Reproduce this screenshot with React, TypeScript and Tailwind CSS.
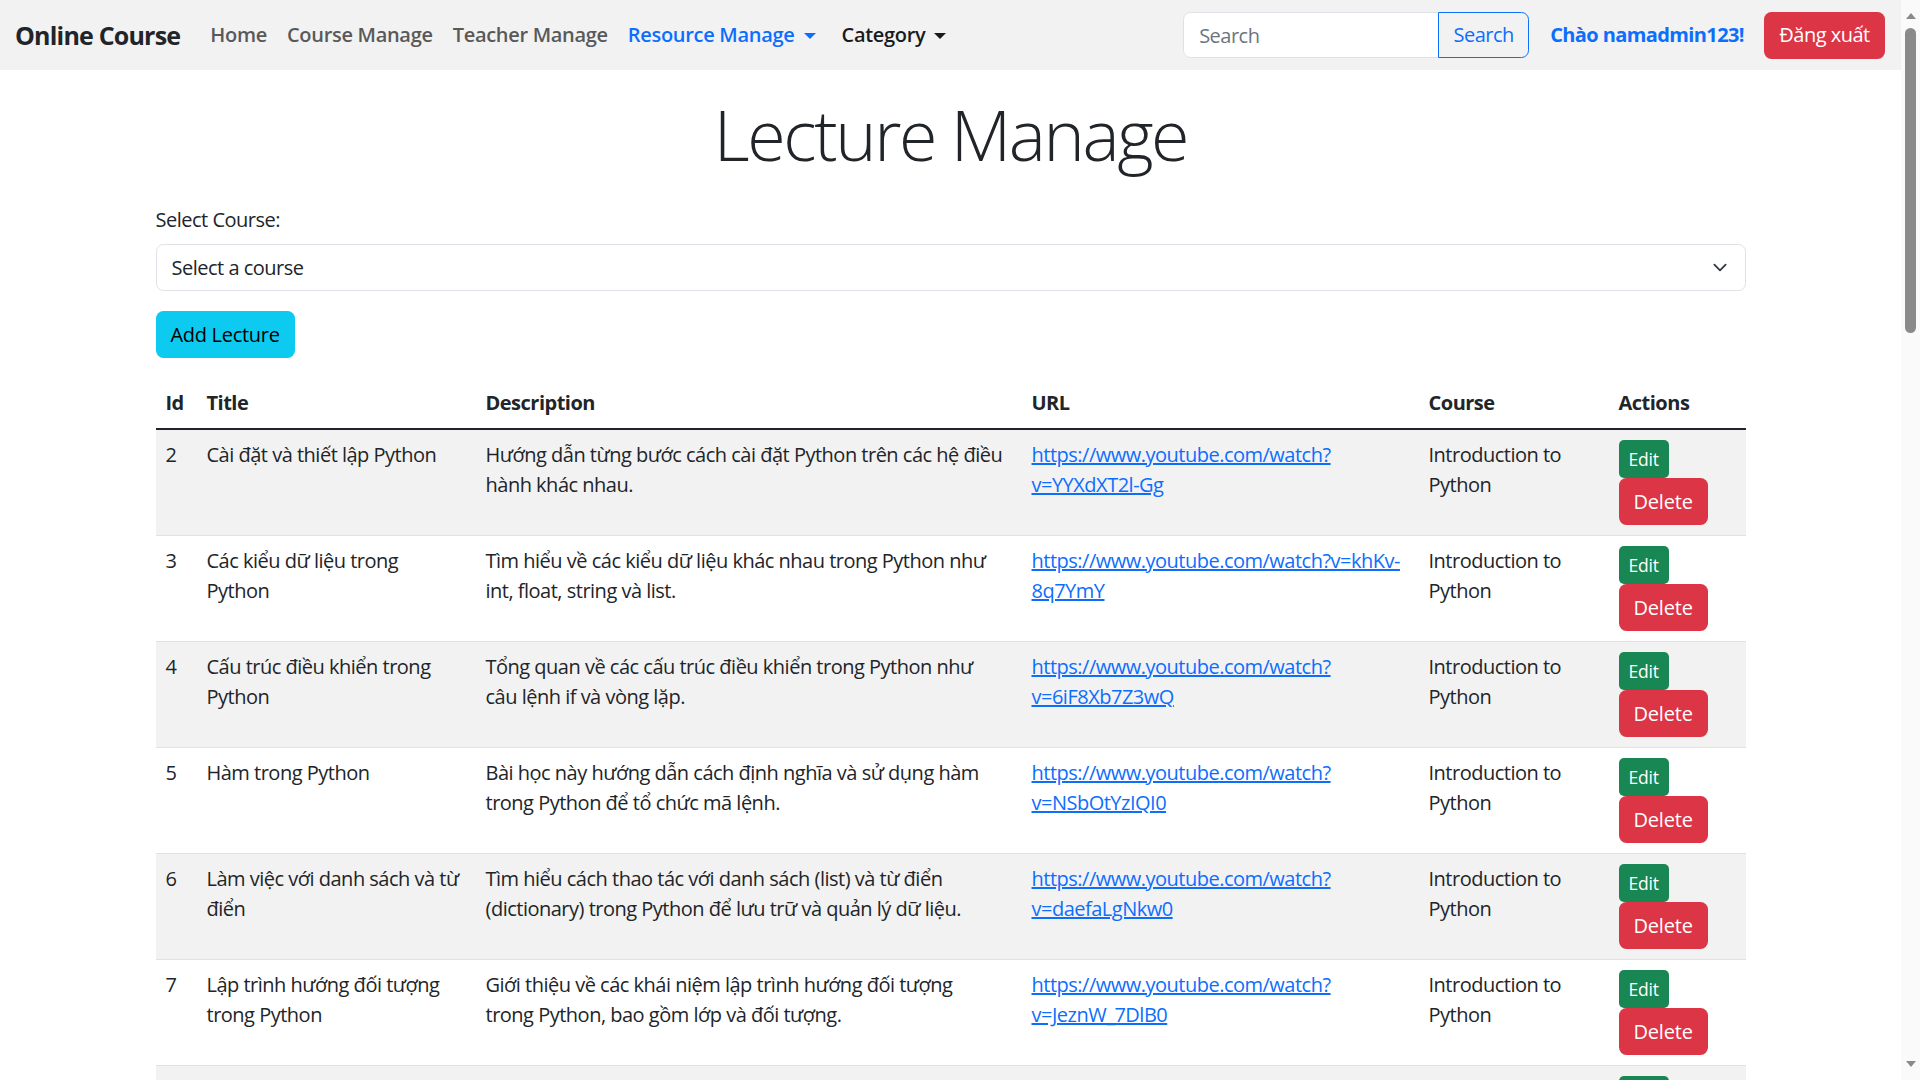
import React from "react";

type Lecture = {
  id: number;
  title: string[];
  description: string[];
  url: string[];
};

const lectures: Lecture[] = [
  {
    id: 2,
    title: ["Cài đặt và thiết lập Python"],
    description: ["Hướng dẫn từng bước cách cài đặt Python trên các hệ điều", "hành khác nhau."],
    url: ["https://www.youtube.com/watch?", "v=YYXdXT2l-Gg"],
  },
  {
    id: 3,
    title: ["Các kiểu dữ liệu trong", "Python"],
    description: ["Tìm hiểu về các kiểu dữ liệu khác nhau trong Python như", "int, float, string và list."],
    url: ["https://www.youtube.com/watch?v=khKv-", "8q7YmY"],
  },
  {
    id: 4,
    title: ["Cấu trúc điều khiển trong", "Python"],
    description: ["Tổng quan về các cấu trúc điều khiển trong Python như", "câu lệnh if và vòng lặp."],
    url: ["https://www.youtube.com/watch?", "v=6iF8Xb7Z3wQ"],
  },
  {
    id: 5,
    title: ["Hàm trong Python"],
    description: ["Bài học này hướng dẫn cách định nghĩa và sử dụng hàm", "trong Python để tổ chức mã lệnh."],
    url: ["https://www.youtube.com/watch?", "v=NSbOtYzIQI0"],
  },
  {
    id: 6,
    title: ["Làm việc với danh sách và từ", "điển"],
    description: ["Tìm hiểu cách thao tác với danh sách (list) và từ điển", "(dictionary) trong Python để lưu trữ và quản lý dữ liệu."],
    url: ["https://www.youtube.com/watch?", "v=daefaLgNkw0"],
  },
  {
    id: 7,
    title: ["Lập trình hướng đối tượng", "trong Python"],
    description: ["Giới thiệu về các khái niệm lập trình hướng đối tượng", "trong Python, bao gồm lớp và đối tượng."],
    url: ["https://www.youtube.com/watch?", "v=JeznW_7DlB0"],
  },
  {
    id: 8,
    title: [""],
    description: [""],
    url: [""],
  },
];

const Caret = () => (
  <svg width="12" height="6" viewBox="0 0 12 6" className="ml-[9px] mt-[2px] shrink-0">
    <polygon points="0,0 12,0 6,6" fill="currentColor" />
  </svg>
);

const Lines = ({ lines }: { lines: string[] }) => (
  <>
    {lines.map((l, i) => (
      <span key={i} className="block whitespace-nowrap">
        {l}
      </span>
    ))}
  </>
);

export default function App() {
  return (
    <div className="flex h-screen w-full overflow-hidden bg-white text-[#212529] font-['Open_Sans','Noto_Sans',sans-serif] text-[20px] leading-[30px] tracking-[-0.5px]">
      <div className="min-w-0 flex-1 overflow-hidden">
        {/* navbar */}
        <nav className="flex h-[70px] items-center justify-between bg-[#f2f2f2] pl-[15px] pr-[16px]">
          <div className="flex items-center tracking-[-0.3px]">
            <span className="mr-[20px] text-[25px] font-bold tracking-[-0.8px] text-[#212529]">Online Course</span>
            <span className="px-[10px] font-semibold text-[#595959]">Home</span>
            <span className="px-[10px] font-semibold text-[#595959]">Course Manage</span>
            <span className="px-[10px] font-semibold text-[#595959]">Teacher Manage</span>
            <span className="flex items-center px-[10px] font-semibold text-[#0d6efd]">
              Resource Manage
              <Caret />
            </span>
            <span className="ml-[6px] flex items-center px-[10px] font-semibold text-[#1a1a1a]">
              Category
              <Caret />
            </span>
          </div>
          <div className="flex items-center">
            <div className="flex h-[46px]">
              <input
                readOnly
                placeholder="Search"
                className="h-full w-[256px] rounded-l-[7.5px] border border-[#dee2e6] bg-white px-[15px] text-[20px] tracking-[-0.5px] outline-none placeholder:text-[#6c757d]"
              />
              <button className="-ml-px h-full w-[91px] rounded-r-[7.5px] border border-[#0d6efd] text-[#0d6efd]">
                Search
              </button>
            </div>
            <span className="ml-[21px] font-bold tracking-[-0.6px] text-[#0d6efd]">Chào namadmin123!</span>
            <button className="ml-[20px] h-[47px] w-[121px] rounded-[7.5px] bg-[#dc3545] text-white">
              Đăng xuất
            </button>
          </div>
        </nav>

        <main className="mx-auto w-[1590px]">
          <h1 className="mt-[22px] mb-[29px] text-center text-[70px] font-light leading-[84px] tracking-[-2.4px]">
            Lecture Manage
          </h1>

          <label className="mb-[9px] block">Select Course:</label>
          <div className="flex h-[47px] items-center justify-between rounded-[7.5px] border border-[#dee2e6] pl-[15px] pr-[15px]">
            <span>Select a course</span>
            <svg width="20" height="15" viewBox="0 0 16 16" fill="none" stroke="#343a40" strokeWidth="2" strokeLinecap="round" strokeLinejoin="round">
              <path d="m2 5 6 6 6-6" />
            </svg>
          </div>

          <button className="mt-[20px] h-[47px] rounded-[7.5px] bg-[#0dcaf0] px-[15px] tracking-[-0.3px] text-black">
            Add Lecture
          </button>

          <table className="mt-[20px] w-full table-fixed border-collapse">
            <colgroup>
              <col className="w-[41px]" />
              <col className="w-[279px]" />
              <col className="w-[546px]" />
              <col className="w-[397px]" />
              <col className="w-[190px]" />
              <col className="w-[137px]" />
            </colgroup>
            <thead>
              <tr className="border-b-2 border-[#212529] text-left">
                <th className="p-[10px] font-bold">Id</th>
                <th className="p-[10px] font-bold">Title</th>
                <th className="p-[10px] font-bold">Description</th>
                <th className="p-[10px] font-bold">URL</th>
                <th className="p-[10px] font-bold">Course</th>
                <th className="p-[10px] font-bold">Actions</th>
              </tr>
            </thead>
            <tbody>
              {lectures.map((lec, i) => (
                <tr
                  key={lec.id}
                  className={`border-b border-[#dee2e6] align-top ${i % 2 === 0 ? "bg-[#f2f2f2]" : "bg-white"}`}
                >
                  <td className="p-[10px]">{lec.id}</td>
                  <td className="p-[10px]">
                    <Lines lines={lec.title} />
                  </td>
                  <td className="p-[10px]">
                    <Lines lines={lec.description} />
                  </td>
                  <td className="p-[10px]">
                    {lec.url[0] && (
                      <a href="#" className="text-[#0d6efd] underline">
                        <Lines lines={lec.url} />
                      </a>
                    )}
                  </td>
                  <td className="p-[10px]">
                    {lec.url[0] && <Lines lines={["Introduction to", "Python"]} />}
                  </td>
                  <td className="p-[10px]">
                    <div className="flex flex-col items-start tracking-[-0.2px]">
                      <button className="h-[38px] rounded-[5px] bg-[#198754] px-[10px] text-[17.5px] text-white">
                        Edit
                      </button>
                      <button className="h-[47px] rounded-[7.5px] bg-[#dc3545] px-[15px] text-white">
                        Delete
                      </button>
                    </div>
                  </td>
                </tr>
              ))}
            </tbody>
          </table>
        </main>
      </div>

      {/* scrollbar */}
      <div className="flex w-[19px] shrink-0 flex-col items-center bg-[#fafafa] pt-[13px] pb-[13px]">
        <svg width="10" height="6" viewBox="0 0 10 6">
          <polygon points="5,0 10,6 0,6" fill="#8a8a8a" />
        </svg>
        <div className="mt-[9px] h-[305px] w-[11px] rounded-full bg-[#8a8a8a]" />
        <div className="flex-1" />
        <svg width="10" height="6" viewBox="0 0 10 6">
          <polygon points="0,0 10,0 5,6" fill="#8a8a8a" />
        </svg>
      </div>
    </div>
  );
}
